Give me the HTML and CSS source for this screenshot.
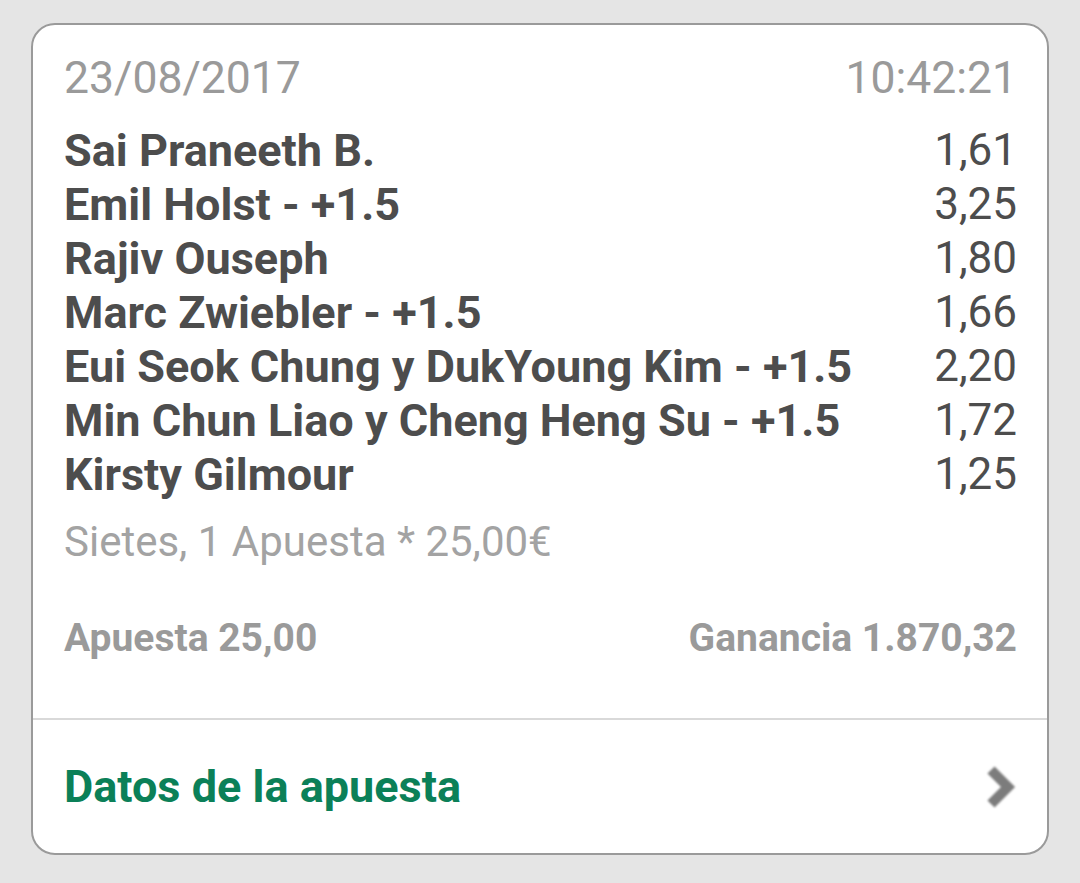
FILE: index.html
```html
<!DOCTYPE html>
<html lang="es">
<head>
  <meta charset="UTF-8">
  <meta name="viewport" content="width=device-width, initial-scale=1.0">
  <title>Apuesta</title>
  <link rel="stylesheet" href="styles.css">
</head>
<body>
  <div class="bet-card">
    <div class="bet-body">
      <div class="row meta">
        <span>23/08/2017</span>
        <span>10:42:21</span>
      </div>
      <div class="selections">
        <div class="row"><span>Sai Praneeth B.</span><span class="odds">1,61</span></div>
        <div class="row"><span>Emil Holst - +1.5</span><span class="odds">3,25</span></div>
        <div class="row"><span>Rajiv Ouseph</span><span class="odds">1,80</span></div>
        <div class="row"><span>Marc Zwiebler - +1.5</span><span class="odds">1,66</span></div>
        <div class="row"><span>Eui Seok Chung y DukYoung Kim - +1.5</span><span class="odds">2,20</span></div>
        <div class="row"><span>Min Chun Liao y Cheng Heng Su - +1.5</span><span class="odds">1,72</span></div>
        <div class="row"><span>Kirsty Gilmour</span><span class="odds">1,25</span></div>
      </div>
      <div class="bet-type">Sietes, 1 Apuesta * 25,00€</div>
      <div class="row totals">
        <span>Apuesta 25,00</span>
        <span>Ganancia 1.870,32</span>
      </div>
    </div>
    <div class="bet-footer">
      <span>Datos de la apuesta</span>
      <svg class="chevron" width="32" height="44" viewBox="0 0 32 44">
        <path d="M7 5 L24 22 L7 39" fill="none" stroke="#7c7c7c" stroke-width="10" stroke-linejoin="miter"/>
      </svg>
    </div>
  </div>
</body>
</html>
```

FILE: styles.css
```css
body {
  margin: 0;
  background-color: #e5e5e5;
  font-family: Roboto, "Liberation Sans", sans-serif;
}

.bet-card {
  margin: 23px 0 0 31px;
  width: 1018px;
  height: 832px;
  box-sizing: border-box;
  background-color: #fff;
  border: 2px solid #9a9a9a;
  border-radius: 24px;
  display: flex;
  flex-direction: column;
}

.bet-body {
  padding: 26px 30px 53px 31px;
  border-bottom: 2px solid #d9d9d9;
}

.row {
  display: flex;
  justify-content: space-between;
  align-items: center;
  height: 54px;
}

.meta {
  font-size: 44.5px;
  color: #9a9a9a;
}

.selections {
  margin-top: 18px;
  font-size: 45px;
  font-weight: bold;
  color: #4d4d4d;
}

.selections .odds {
  font-weight: normal;
  font-size: 44px;
}

.bet-type {
  margin-top: 14px;
  height: 54px;
  line-height: 54px;
  font-size: 42px;
  color: #a3a3a3;
}

.totals {
  margin-top: 42px;
  font-size: 39px;
  font-weight: bold;
  color: #9a9a9a;
}

.bet-footer {
  flex: 1;
  display: flex;
  justify-content: space-between;
  align-items: center;
  padding: 0 31px 0 31px;
  font-size: 45px;
  font-weight: bold;
  color: #0b8058;
}

.chevron {
  filter: blur(1px);
}
```
